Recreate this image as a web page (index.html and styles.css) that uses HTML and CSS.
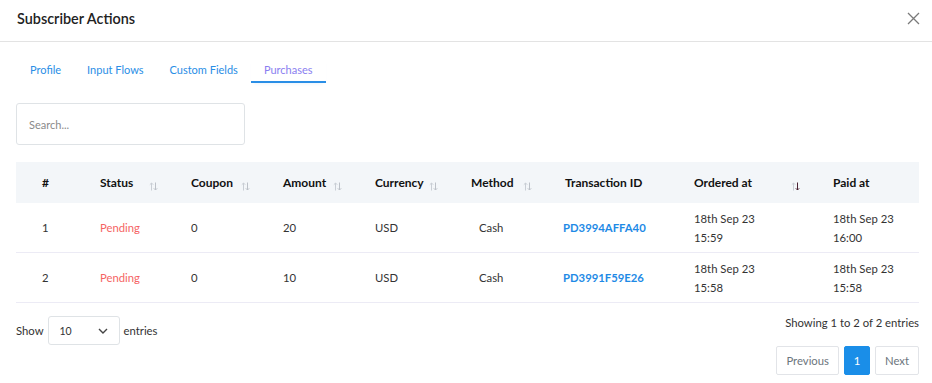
FILE: index.html
```html
<!DOCTYPE html>
<html lang="en">
<head>
    <meta charset="UTF-8">
    <meta name="viewport" content="width=device-width, initial-scale=1.0">
    <title>Subscriber Actions</title>
    <link rel="stylesheet" href="styles.css">
</head>
<body>
    <div class="modal">
        <div class="modal-header">
            <h5 class="modal-title">Subscriber Actions</h5>
            <button class="close-btn" aria-label="Close">
                <svg width="13" height="13" viewBox="0 0 13 13"><path d="M1 1 L12 12 M12 1 L1 12" stroke="#7a7a7a" stroke-width="1.3" fill="none"/></svg>
            </button>
        </div>
        <div class="modal-body">
            <ul class="tabs">
                <li><a href="#">Profile</a></li>
                <li><a href="#">Input Flows</a></li>
                <li><a href="#">Custom Fields</a></li>
                <li><a href="#" class="active">Purchases</a></li>
            </ul>

            <input type="text" class="search" placeholder="Search...">

            <table class="purchases">
                <colgroup>
                    <col style="width: 66px">
                    <col style="width: 91px">
                    <col style="width: 92px">
                    <col style="width: 92px">
                    <col style="width: 96px">
                    <col style="width: 94px">
                    <col style="width: 129px">
                    <col style="width: 139px">
                    <col style="width: 104px">
                </colgroup>
                <thead>
                    <tr>
                        <th class="num">#</th>
                        <th><div class="th-inner">Status <svg class="sort" viewBox="0 0 9 9"><path class="up" d="M2.5 8.5 V1 M0.8 2.7 L2.5 1 L4.2 2.7"/><path class="down" d="M6.5 0.5 V8 M4.8 6.3 L6.5 8 L8.2 6.3"/></svg></div></th>
                        <th><div class="th-inner">Coupon <svg class="sort" viewBox="0 0 9 9"><path class="up" d="M2.5 8.5 V1 M0.8 2.7 L2.5 1 L4.2 2.7"/><path class="down" d="M6.5 0.5 V8 M4.8 6.3 L6.5 8 L8.2 6.3"/></svg></div></th>
                        <th><div class="th-inner">Amount <svg class="sort" viewBox="0 0 9 9"><path class="up" d="M2.5 8.5 V1 M0.8 2.7 L2.5 1 L4.2 2.7"/><path class="down" d="M6.5 0.5 V8 M4.8 6.3 L6.5 8 L8.2 6.3"/></svg></div></th>
                        <th><div class="th-inner">Currency <svg class="sort" viewBox="0 0 9 9"><path class="up" d="M2.5 8.5 V1 M0.8 2.7 L2.5 1 L4.2 2.7"/><path class="down" d="M6.5 0.5 V8 M4.8 6.3 L6.5 8 L8.2 6.3"/></svg></div></th>
                        <th><div class="th-inner">Method <svg class="sort" viewBox="0 0 9 9"><path class="up" d="M2.5 8.5 V1 M0.8 2.7 L2.5 1 L4.2 2.7"/><path class="down" d="M6.5 0.5 V8 M4.8 6.3 L6.5 8 L8.2 6.3"/></svg></div></th>
                        <th>Transaction ID</th>
                        <th><div class="th-inner">Ordered at <svg class="sort sorted" viewBox="0 0 9 9"><path class="up" d="M2.5 8.5 V1 M0.8 2.7 L2.5 1 L4.2 2.7"/><path class="down" d="M6.5 0.5 V8 M4.8 6.3 L6.5 8 L8.2 6.3"/></svg></div></th>
                        <th>Paid at</th>
                    </tr>
                </thead>
                <tbody>
                    <tr>
                        <td class="num">1</td>
                        <td class="pending">Pending</td>
                        <td>0</td>
                        <td>20</td>
                        <td>USD</td>
                        <td class="method">Cash</td>
                        <td><a href="#" class="txn">PD3994AFFA40</a></td>
                        <td>18th Sep 23<br>15:59</td>
                        <td>18th Sep 23<br>16:00</td>
                    </tr>
                    <tr>
                        <td class="num">2</td>
                        <td class="pending">Pending</td>
                        <td>0</td>
                        <td>10</td>
                        <td>USD</td>
                        <td class="method">Cash</td>
                        <td><a href="#" class="txn">PD3991F59E26</a></td>
                        <td>18th Sep 23<br>15:58</td>
                        <td>18th Sep 23<br>15:58</td>
                    </tr>
                </tbody>
            </table>

            <div class="table-footer">
                <div class="length">
                    <span>Show</span>
                    <div class="select">
                        <span>10</span>
                        <svg width="10" height="6" viewBox="0 0 10 6"><path d="M1 1 L5 5 L9 1" stroke="#444" stroke-width="1.4" fill="none"/></svg>
                    </div>
                    <span>entries</span>
                </div>
                <div class="paging">
                    <div class="info">Showing 1 to 2 of 2 entries</div>
                    <div class="pagination">
                        <a href="#" class="page">Previous</a>
                        <a href="#" class="page current">1</a>
                        <a href="#" class="page">Next</a>
                    </div>
                </div>
            </div>
        </div>
    </div>
</body>
</html>
```

FILE: styles.css
```css
body, html {
    margin: 0;
    font-family: Lato, "Open Sans", Arial, sans-serif;
    font-size: 11.3px;
    color: #333;
    background-color: #fff;
}
.modal {
    width: 932px;
}
.modal-header {
    height: 41px;
    display: flex;
    align-items: center;
    justify-content: space-between;
    padding: 0 12px 0 17px;
    border-bottom: 1px solid #e3e3e3;
}
.modal-title {
    margin: 0 0 5px 0;
    font-size: 14.4px;
    font-weight: 600;
    color: #222;
}
.close-btn {
    border: none;
    background: none;
    padding: 0;
    margin-bottom: 5px;
    cursor: pointer;
    display: flex;
}
.modal-body {
    padding: 16px 13px 0 16px;
}
.tabs {
    list-style: none;
    margin: 0 0 20px 1px;
    padding: 0;
    display: flex;
    font-size: 11px;
}
.tabs a {
    display: block;
    padding: 3px 13px 2px;
    line-height: 18px;
    color: #2a8ee6;
    text-decoration: none;
    border-bottom: 2px solid transparent;
}
.tabs a.active {
    color: #8a7ef0;
    border-bottom-color: #2a8ee6;
    box-shadow: 0 3px 4px -3px rgba(42, 142, 230, 0.15);
}
.search {
    display: block;
    box-sizing: border-box;
    width: 229px;
    height: 42px;
    padding: 0 12px;
    border: 1px solid #dfe3e6;
    border-radius: 3px;
    font-family: inherit;
    font-size: 11px;
    color: #333;
    margin-bottom: 17px;
}
.search::placeholder {
    color: #8a8a8a;
}
.purchases {
    width: 903px;
    border-collapse: collapse;
    table-layout: fixed;
}
.purchases th {
    height: 41px;
    padding: 0 0 0 18px;
    background-color: #f3f6f9;
    text-align: left;
    font-size: 12px;
    font-weight: 700;
    color: #111;
}
.purchases th.num {
    padding-left: 26px;
}
.th-inner {
    display: flex;
    justify-content: space-between;
    align-items: flex-start;
    padding-right: 15px;
}
.sort {
    width: 9px;
    height: 9px;
    margin-top: 7px;
    fill: none;
    stroke-width: 1;
}
.sort .up {
    stroke: #c9ced5;
}
.sort .down {
    stroke: #bcc1c8;
}
.sort.sorted .down {
    stroke: #4a2233;
}
.purchases td {
    height: 49px;
    padding: 0 0 0 18px;
    border-bottom: 1px solid #ecebf5;
    line-height: 19px;
    color: #333;
}
.purchases td.num {
    padding-left: 26px;
}
.pending {
    color: #f56464 !important;
}
.method {
    padding-left: 26px !important;
}
.txn {
    color: #1e8ae6;
    font-weight: 700;
    text-decoration: none;
    margin-left: -2px;
}
.table-footer {
    display: flex;
    justify-content: space-between;
    align-items: flex-start;
    width: 903px;
    padding-top: 12px;
}
.length {
    display: flex;
    align-items: center;
    gap: 4px;
    margin-top: 1px;
}
.select {
    box-sizing: border-box;
    width: 72px;
    height: 29px;
    border: 1px solid #dfe3e6;
    border-radius: 3px;
    display: flex;
    align-items: center;
    justify-content: space-between;
    padding: 0 11px 0 11px;
    font-size: 10.5px;
}
.paging {
    display: flex;
    flex-direction: column;
    align-items: flex-end;
}
.info {
    line-height: 16px;
}
.pagination {
    display: flex;
    gap: 5px;
    margin-top: 15px;
}
.page {
    box-sizing: border-box;
    height: 29px;
    padding: 0 9px;
    display: flex;
    align-items: center;
    border: 1px solid #e2e4e8;
    border-radius: 2px;
    color: #6c757d;
    text-decoration: none;
}
.page.current {
    width: 26px;
    justify-content: center;
    padding: 0;
    background-color: #1a8ee8;
    border-color: #1a8ee8;
    color: #fff;
}
```
